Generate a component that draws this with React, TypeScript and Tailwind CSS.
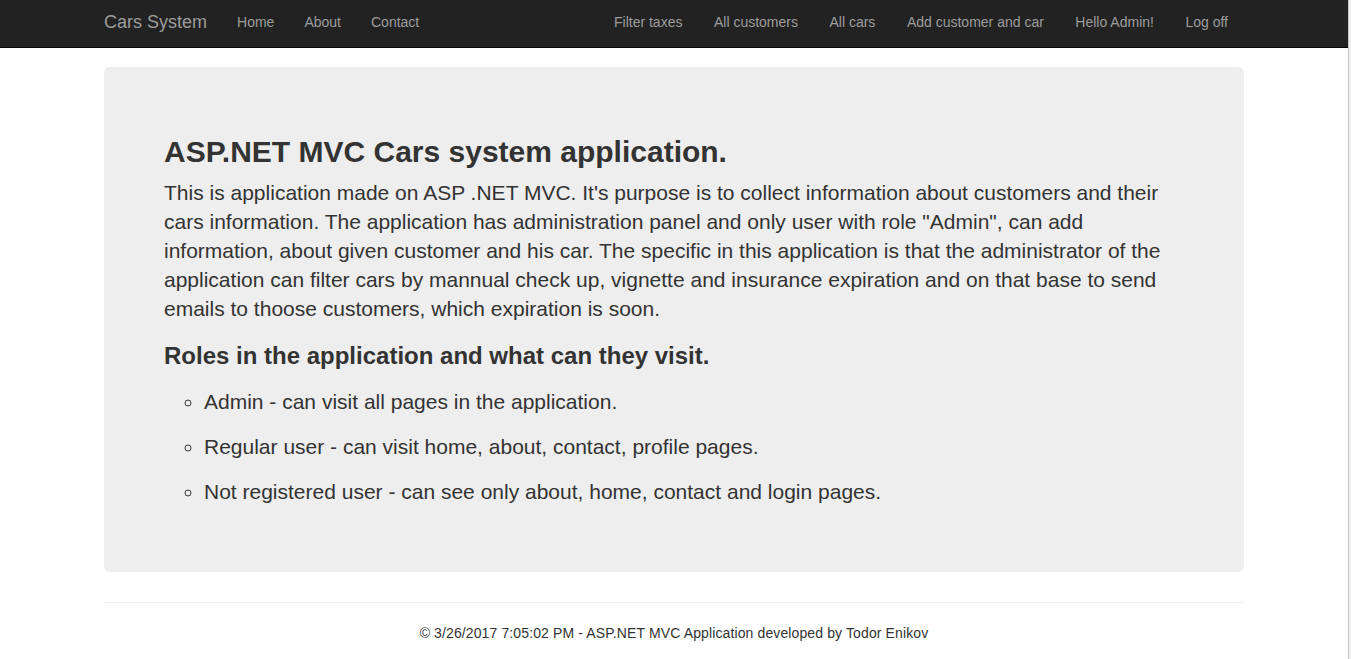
const leftLinks = ['Home', 'About', 'Contact']
const rightLinks = ['Filter taxes', 'All customers', 'All cars', 'Add customer and car', 'Hello Admin!', 'Log off']

const roles = [
  'Admin - can visit all pages in the application.',
  'Regular user - can visit home, about, contact, profile pages.',
  'Not registered user - can see only about, home, contact and login pages.',
]

function Navbar() {
  return (
    <nav className="h-[48px] border-b border-[#080808] bg-[#222]">
      <div className="mx-auto flex h-[47px] w-[1140px] items-center justify-between pb-[4px]">
        <div className="flex items-center">
          <a className="pr-[15px] text-[18px] leading-[20px] text-[#9d9d9d]">Cars System</a>
          <ul className="flex">
            {leftLinks.map((l) => (
              <li key={l}>
                <a className="block px-[15px] text-[14px] leading-[20px] text-[#9d9d9d]">{l}</a>
              </li>
            ))}
          </ul>
        </div>
        <ul className="flex gap-[1.5px] pr-[1px]">
          {rightLinks.map((l) => (
            <li key={l}>
              <a className="block px-[15px] text-[14px] leading-[20px] text-[#9d9d9d]">{l}</a>
            </li>
          ))}
        </ul>
      </div>
    </nav>
  )
}

export default function App() {
  return (
    <div className="flex min-h-screen bg-white font-['Liberation_Sans',Arial,sans-serif] text-[#333]">
      <div className="flex-1">
        <Navbar />
        <main className="mx-auto w-[1140px] pt-[19px]">
          <div className="rounded-[6px] bg-[#eee] px-[60px] pt-[48px] pb-[50px]">
            <h2 className="mt-[20px] mb-[10px] text-[30px] leading-[33px] font-bold">
              ASP.NET MVC Cars system application.
            </h2>
            <p className="mb-[20px] text-[21px] leading-[29px]">
              This is application made on ASP .NET MVC. It's purpose is to collect information about customers and their
              cars information. The application has administration panel and only user with role "Admin", can add
              information, about given customer and his car. The specific in this application is that the administrator of the
              application can filter cars by mannual check up, vignette and insurance expiration and on that base to send
              emails to thoose customers, which expiration is soon.
            </p>
            <h3 className="mb-[18px] text-[24px] leading-[26px] font-bold">Roles in the application and what can they visit.</h3>
            <ul className="list-[circle] pl-[40px]">
              {roles.map((r) => (
                <li key={r} className="mb-[15px] text-[21px] leading-[30px]">
                  {r}
                </li>
              ))}
            </ul>
          </div>
          <hr className="mt-[30px] border-t border-[#eee]" />
          <footer className="pt-[20px] text-center text-[14px] leading-[20px] tracking-[0.12px]">
            © 3/26/2017 7:05:02 PM - ASP.NET MVC Application developed by Todor Enikov
          </footer>
        </main>
      </div>
      <div className="w-[3px] border-l border-[#c8c8c8] bg-[#f1f1f1]" />
    </div>
  )
}
